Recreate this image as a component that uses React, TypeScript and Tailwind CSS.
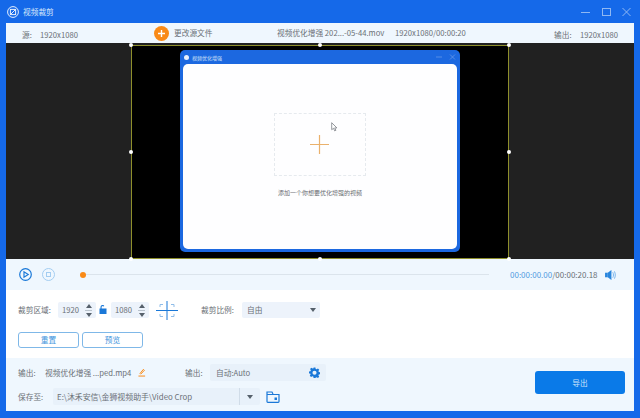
import React from "react";

const font = { fontFamily: '"Noto Sans CJK SC", "Noto Sans", sans-serif' };

function Handle({ c }: { c: string }) {
  return <span className={`absolute w-[4px] h-[4px] bg-white rounded-full ${c}`} />;
}

function Stepper() {
  return (
    <span className="flex flex-col items-center gap-[3px] w-[9px]">
      <span className="w-0 h-0 border-x-[3.5px] border-x-transparent border-b-[4px] border-b-[#56606b]" />
      <span className="w-[7px] h-px bg-[#b8c2cc] -my-[1px]" />
      <span className="w-0 h-0 border-x-[3.5px] border-x-transparent border-t-[4px] border-t-[#56606b]" />
    </span>
  );
}

export default function App() {
  return (
    <div style={font} className="w-[640px] h-[418px] bg-[#1569e9] flex flex-col overflow-hidden text-[#6a7076] text-[7.7px] leading-none">
      {/* title bar */}
      <div className="h-[23px] flex items-center shrink-0 pl-[7px] pr-[8px] text-[#d7e7fb]">
        <svg width="12" height="12" viewBox="0 0 12 12" fill="none" stroke="#e6f0fd" strokeWidth="1">
          <circle cx="6" cy="6" r="5.4" />
          <rect x="3.4" y="3.4" width="5.2" height="5.2" />
          <path d="M3.6 8.4 8.4 3.6" />
        </svg>
        <span className="ml-[4px]">视频裁剪</span>
        <span className="flex-1" />
        <svg width="51" height="12" viewBox="0 0 51 12" fill="none" stroke="#8fb8f3" strokeWidth="1">
          <path d="M0 6.5h9" />
          <rect x="21.500" y="2.500" width="8" height="7" />
          <path d="M41.500 2l8 8M49.500 2l-8 8" />
        </svg>
      </div>

      {/* main */}
      <div className="mx-[6px] w-[628px] h-[388px] flex flex-col bg-white">
        {/* info bar */}
        <div className="h-[20px] shrink-0 bg-[#eff7fe] flex items-center pl-[16px] pr-[16px]">
          <span className="w-[18px] mt-[3px]">源:</span>
          <span className="w-[114px] mt-[3px]">1920x1080</span>
          <span className="w-[15px] h-[15px] rounded-full bg-[#f98a17] flex items-center justify-center">
            <svg width="9" height="9" viewBox="0 0 9 9" stroke="#fff" strokeWidth="1.4">
              <path d="M4.5 1v7M1 4.500h7" />
            </svg>
          </span>
          <span className="ml-[5px] w-[103px]">更改源文件</span>
          <span className="w-[118px]">视频优化增强 202...-05-44.mov</span>
          <span className="flex-1">1920x1080/00:00:20</span>
          <span className="w-[26px] mt-[3px]">输出:</span>
          <span className="mt-[3px]">1920x1080</span>
        </div>

        {/* video */}
        <div className="h-[216px] shrink-0 bg-[#212121] flex justify-center items-start">
          <div className="relative mt-[2px] w-[378px] h-[214px] bg-black border border-[#8e8f2c] flex items-start justify-center pt-[4px]">
            <Handle c="-left-[3px] -top-[3px]" />
            <Handle c="left-[186px] -top-[3px]" />
            <Handle c="-right-[3px] -top-[3px]" />
            <Handle c="-left-[3px] top-[104px]" />
            <Handle c="-right-[3px] top-[104px]" />
            <Handle c="-left-[3px] -bottom-[3px]" />
            <Handle c="left-[186px] -bottom-[3px]" />
            <Handle c="-right-[3px] -bottom-[3px]" />

            {/* captured window */}
            <div className="w-[280px] h-[202px] bg-[#1c68e0] rounded-[5px] flex flex-col px-[3px] pb-[3px]">
              <div className="h-[14px] shrink-0 flex items-center pl-[1px] pr-[1px]">
                <span className="w-[5px] h-[5px] rounded-full bg-[#e8f0fc]" />
                <span className="ml-[3px] text-[5px] text-[#cfe0f9]">视频优化增强</span>
                <span className="flex-1" />
                <svg width="20" height="6" viewBox="0 0 20 6" fill="none" stroke="#6d9de8" strokeWidth="0.7">
                  <path d="M0 3h6M14 .5l5 5M19 .5l-5 5" />
                </svg>
              </div>
              <div className="flex-1 bg-[#fefeff] rounded-[5px] flex flex-col items-center pt-[49px]">
                <div className="relative w-[92px] h-[63px] -ml-[1px] border border-dashed border-[#e6eaee] flex items-center justify-center">
                  <svg width="19" height="19" viewBox="0 0 19 19" stroke="#eab16c" strokeWidth="1.2">
                    <path d="M9.500 0v19M0 9.500h19" />
                  </svg>
                  <svg className="absolute left-[56px] top-[8px]" width="7" height="10" viewBox="0 0 7 10" fill="#fff" stroke="#7b7f85" strokeWidth="0.8">
                    <path d="M.7.7v7l1.8-1.4 1.2 2.6 1.2-.6-1.2-2.4h2.2z" />
                  </svg>
                </div>
                <span className="mt-[14px] text-[6px] text-[#6a6d72]">添加一个你想要优化增强的视频</span>
              </div>
            </div>
          </div>
        </div>

        {/* playback */}
        <div className="h-[31px] shrink-0 bg-[#eff7fe] flex items-center">
          <svg className="ml-[13px]" width="13" height="13" viewBox="0 0 13 13" fill="none" stroke="#1a78d8" strokeWidth="1.2">
            <circle cx="6.5" cy="6.5" r="5.8" />
            <path d="M5 3.800v5.400l4.200-2.700z" />
          </svg>
          <svg className="ml-[10px]" width="13" height="13" viewBox="0 0 13 13" fill="none" stroke="#a3cdf1" strokeWidth="1">
            <circle cx="6.5" cy="6.5" r="6" />
            <rect x="4.500" y="4.500" width="4" height="4" />
          </svg>
          <span className="ml-[25px] w-[6px] h-[6px] rounded-full bg-[#f98a17]" />
          <span className="w-[403px] h-px bg-[#dbe4ec]" />
          <span className="ml-[21px] text-[8px] text-[#4f9bdf]">00:00:00.00</span>
          <span className="text-[8px]">/00:00:20.18</span>
          <span className="flex-1" />
          <svg className="mr-[18px]" width="11" height="10" viewBox="0 0 12 11" fill="none">
            <rect x="0" y="3" width="3" height="5" fill="#2a86dd" />
            <path d="M3 3l4-3v11L3 8z" fill="#2a86dd" />
            <path d="M8.500 2.500c1 2 1 4 0 6M10.300 1.500c1.300 2.500 1.300 5.500 0 8" stroke="#6fb0ea" />
          </svg>
        </div>

        {/* crop settings */}
        <div className="h-[68px] shrink-0 bg-white flex flex-col pl-[12px]">
          <div className="flex items-center mt-[12px] h-[16px]">
            <span className="w-[40px]">裁剪区域:</span>
            <div className="w-[38px] h-[16px] bg-[#edf3fb] rounded-[2px] flex items-center pl-[4px] pr-[3px] justify-between">
              <span>1920</span>
              <Stepper />
            </div>
            <svg className="ml-[3px] -mt-[2px]" width="8" height="9" viewBox="0 0 8 9" fill="#1a78d8">
              <path d="M.5 3.500h7V9h-7zM1.500 3.500V2a2 2 0 0 1 3.800-.9l-1 .5A.9.9 0 0 0 2.600 2v1.500z" />
            </svg>
            <div className="ml-[4px] w-[38px] h-[16px] bg-[#edf3fb] rounded-[2px] flex items-center pl-[4px] pr-[3px] justify-between">
              <span>1080</span>
              <Stepper />
            </div>
            <svg className="ml-[7px]" width="22" height="19" viewBox="0 0 22 19" fill="none">
              <path d="M4 6V3.500h3M15 3.500h3V6M4 13v2.500h3M15 15.500h3V13" stroke="#8fbce8" strokeWidth="1" />
              <path d="M11 0v19M0 9.500h22" stroke="#1a78d8" strokeWidth="1" />
            </svg>
            <span className="ml-[23px] w-[41px]">裁剪比例:</span>
            <div className="w-[78px] h-[16px] bg-[#edf3fb] rounded-[2px] flex items-center justify-between pl-[5px] pr-[4px]">
              <span>自由</span>
              <span className="w-0 h-0 border-x-[3px] border-x-transparent border-t-[4px] border-t-[#56606b]" />
            </div>
          </div>
          <div className="flex gap-[3px] mt-[14px]">
            <button className="w-[61px] h-[16px] rounded-[3px] border border-[#7fb8e8] text-[#3f95dd] leading-none">重置</button>
            <button className="w-[61px] h-[16px] rounded-[3px] border border-[#7fb8e8] text-[#3f95dd] leading-none">预览</button>
          </div>
        </div>

        {/* export */}
        <div className="flex-1 bg-[#eff7fe] flex items-center pl-[12px] pr-[9px]">
          <div className="flex flex-col gap-[7px] w-[320px]">
            <div className="flex items-center h-[17px]">
              <span className="w-[27px]">输出:</span>
              <span className="w-[93px]">视频优化增强 ...ped.mp4</span>
              <svg width="8" height="9" viewBox="0 0 9 9" fill="none" stroke="#f98a17" strokeWidth="1.1">
                <path d="M2 6l4-5 1.200 1L3 6.500M.5 8.500h7.500" />
              </svg>
              <span className="ml-[39px] w-[25px]">输出:</span>
              <div className="w-[116px] h-[17px] bg-[#e8f1fa] rounded-[2px] flex items-center justify-between pl-[6px] pr-[6px]">
                <span>自动:Auto</span>
                <svg width="11" height="11" viewBox="0 0 24 24" fill="#1a78d8">
                  <path fillRule="evenodd" d="M10 1h4l.7 3.200 2 .8 2.800-1.700 2.800 2.800-1.700 2.800.8 2 3.200.7v4l-3.200.7-.8 2 1.700 2.800-2.800 2.800-2.800-1.700-2 .8L14 24h-4l-.7-3.200-2-.8-2.800 1.700-2.800-2.800 1.700-2.800-.8-2L0 14v-4l3.200-.7.8-2L2.300 4.500l2.800-2.800 2.800 1.700 2-.8zM12 8a4.500 4.500 0 1 0 0 9 4.500 4.500 0 0 0 0-9z" />
                </svg>
              </div>
            </div>
            <div className="flex items-center h-[17px]">
              <span className="w-[35px]">保存至:</span>
              <div className="w-[207px] h-[17px] bg-[#e8f1fa] rounded-[2px] flex items-center">
                <span className="flex-1 pl-[4px] text-[7.9px]">E:\沐禾安信\金狮视频助手\Video Crop</span>
                <span className="w-[21px] h-[17px] border-l border-[#d0dce8] flex items-center justify-center">
                  <span className="w-0 h-0 border-x-[3px] border-x-transparent border-t-[4px] border-t-[#56606b]" />
                </span>
              </div>
              <svg className="ml-[6px]" width="14" height="12" viewBox="0 0 14 12" fill="none" stroke="#1a78d8" strokeWidth="1.200">
                <path d="M1 2.500V10.500a.8.8 0 0 0 .8.8h10.400a.8.8 0 0 0 .8-.8V3.500H1M1 2.500V1h5l1 2" />
                <rect x="8.500" y="6.500" width="2.500" height="2.500" fill="#1a78d8" stroke="none" />
              </svg>
            </div>
          </div>
          <span className="flex-1" />
          <button className="w-[90px] h-[23px] mb-[4px] rounded-[3px] bg-[#0a7ae8] text-[#cfe4fa] leading-none">导出</button>
        </div>
      </div>
    </div>
  );
}
